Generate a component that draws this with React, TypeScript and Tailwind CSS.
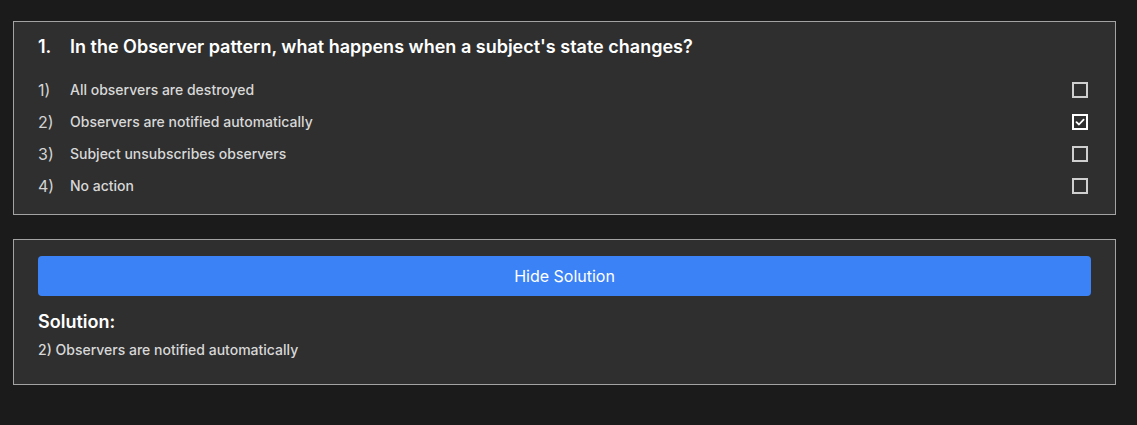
const options = [
  "All observers are destroyed",
  "Observers are notified automatically",
  "Subject unsubscribes observers",
  "No action",
];

const Checkbox = ({ checked }: { checked: boolean }) => (
  <div
    className={`w-4 h-4 mr-[3px] border-2 flex items-center justify-center ${
      checked ? "border-white" : "border-[#cfcfcf]"
    }`}
  >
    {checked && (
      <svg width="10" height="10" viewBox="0 0 10 10" fill="none">
        <path
          d="M1.5 5.2 L4 7.5 L8.6 2.6"
          stroke="#ffffff"
          strokeWidth="1.8"
          strokeLinecap="round"
          strokeLinejoin="round"
        />
      </svg>
    )}
  </div>
);

const App = () => {
  const selected = 1;

  return (
    <div
      className="min-h-[425px] bg-[#1b1b1b] pl-[13px] pr-[21px] pt-[21px]"
      style={{ fontFamily: "Inter, 'Noto Sans', sans-serif" }}
    >
      <div className="border border-[#a3a3a3] bg-[#2f2f2f] px-6 pt-[13px] pb-3">
        <div className="flex flex-row items-center text-lg font-semibold text-white leading-6">
          <span className="w-8">1.</span>
          <span>In the Observer pattern, what happens when a subject's state changes?</span>
        </div>
        <div className="mt-[15px] flex flex-col">
          {options.map((opt, i) => (
            <div key={i} className="flex flex-row items-center h-8">
              <span className="w-8 text-base text-[#d4d4d4]">{i + 1})</span>
              <span className="flex-grow text-sm font-medium text-[#d8d8d8]">{opt}</span>
              <Checkbox checked={i === selected} />
            </div>
          ))}
        </div>
      </div>

      <div className="mt-6 border border-[#a3a3a3] bg-[#2f2f2f] px-6 pt-4 pb-6">
        <button className="w-full h-10 rounded-sm bg-[#3b82f6] text-white text-base">
          Hide Solution
        </button>
        <p className="mt-3 text-lg font-semibold text-white leading-7">Solution:</p>
        <p className="mt-1 text-sm font-medium text-[#d8d8d8] leading-5">
          {selected + 1}) {options[selected]}
        </p>
      </div>
    </div>
  );
};

export default App;
